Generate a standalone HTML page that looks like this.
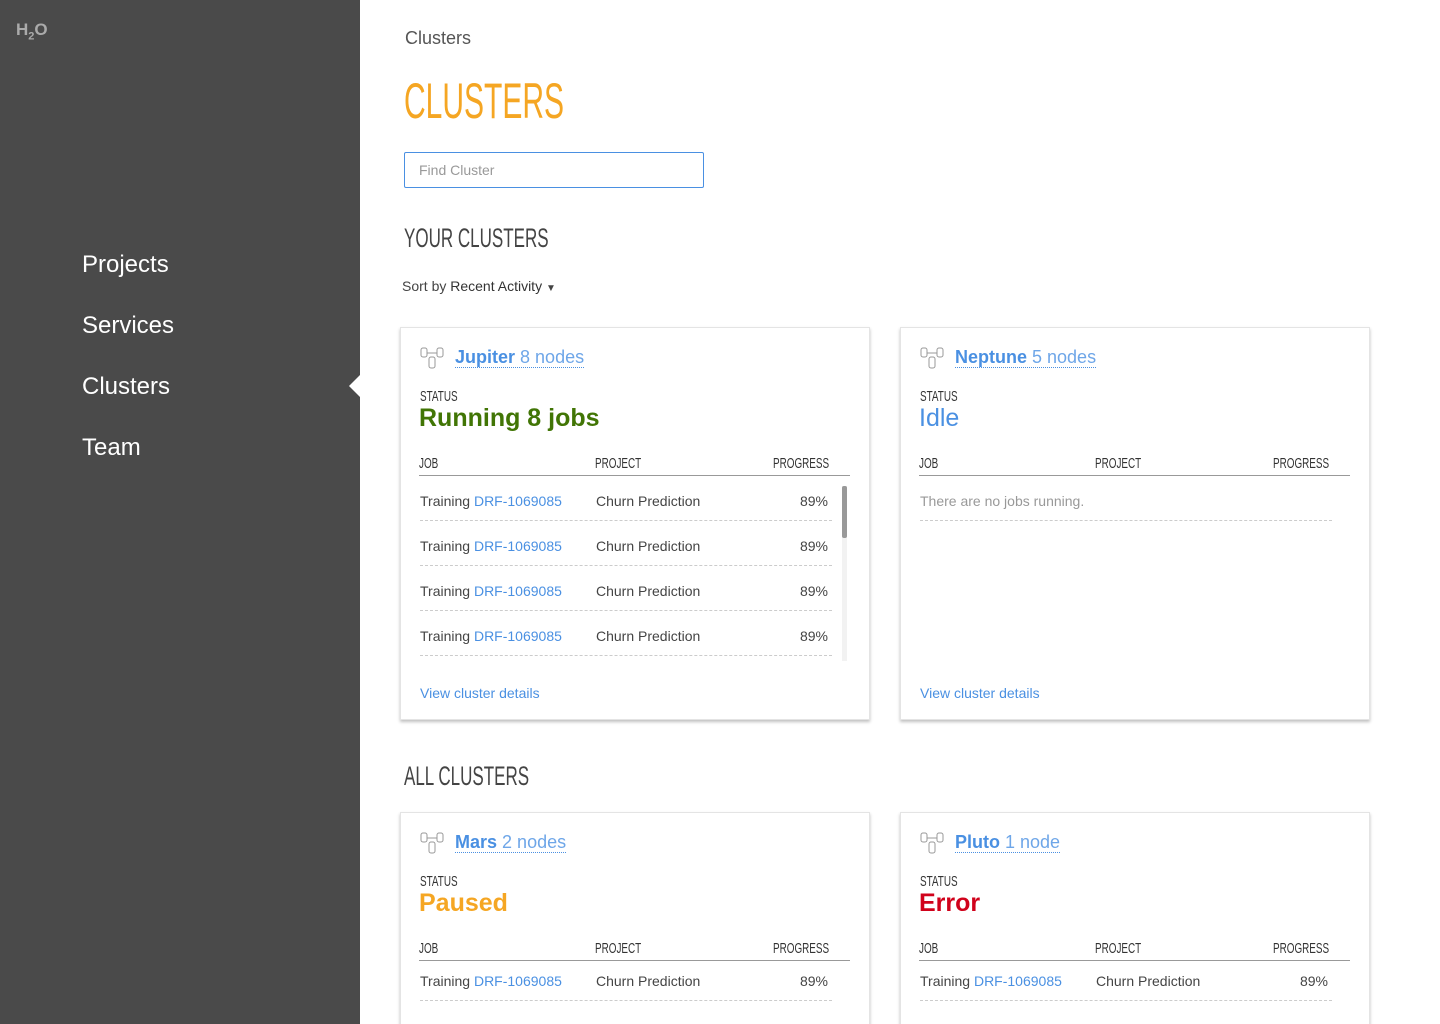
<!DOCTYPE html><html><head><meta charset="utf-8"><style>
*{margin:0;padding:0;box-sizing:border-box}
html,body{width:1440px;height:1024px;overflow:hidden}
body{background:#fff;font-family:"Liberation Sans",sans-serif;color:#444;position:relative}
.a{position:absolute;white-space:nowrap}
.side{position:absolute;left:0;top:0;width:360px;height:1024px;background:#4a4a4a}
.nav{position:absolute;left:82px;color:#fff;font-size:24px}
.cond{display:inline-block;transform:scaleX(.66);transform-origin:left center}
.card{position:absolute;width:470px;background:#fff;border:1px solid #e4e4e4;box-shadow:0 2px 3px rgba(0,0,0,.25)}
.blue{color:#4a90e2}
.ttl{position:absolute;left:54px;top:19px;font-size:18px;color:#4a90e2;border-bottom:1px dotted #4a90e2;line-height:20px}
.ttl b{font-weight:bold}
.ttl span{font-weight:normal;color:#6ea6e8}
.st{position:absolute;left:19px;font-size:15px;color:#333}
.sv{position:absolute;left:18px;font-size:25px;font-weight:bold}
.hd{position:absolute;left:18px;width:431px;font-size:15px;color:#333;border-bottom:1px solid #999;height:21px}
.row{position:absolute;left:19px;width:412px;height:45px;border-bottom:1px dashed #ccc;font-size:14px;color:#444;line-height:50px}
.row .p{position:absolute;left:176px}.row .g{position:absolute;right:4px}
.vd{position:absolute;left:19px;font-size:14px;color:#4a90e2}
</style></head><body>
<div class="side">
<div class="a" style="left:16px;top:20px;color:#aaa;font-weight:bold;font-size:17px">H<sub style="font-size:11px">2</sub>O</div>
<div class="nav" style="top:251px">Projects</div>
<div class="nav" style="top:312px">Services</div>
<div class="nav" style="top:373px">Clusters</div>
<div class="nav" style="top:434px">Team</div>
<div class="a" style="left:349px;top:375px;width:0;height:0;border-top:11px solid transparent;border-bottom:11px solid transparent;border-right:11px solid #fff"></div>
</div>
<div class="a" style="left:405px;top:28px;font-size:18px;color:#555">Clusters</div>
<div class="a" style="left:404px;top:72px;font-size:50px;color:#f5a623"><span class="cond" style="transform:scaleX(.6)">CLUSTERS</span></div>
<div class="a" style="left:404px;top:152px;width:300px;height:36px;border:1px solid #4a90e2;border-radius:2px;font-size:14px;color:#999;padding:9px 14px">Find Cluster</div>
<div class="a" style="left:404px;top:223px;font-size:27px;color:#444"><span class="cond" style="transform:scaleX(.63)">YOUR CLUSTERS</span></div>
<div class="a" style="left:402px;top:278px;font-size:14px;color:#444">Sort by <span style="color:#333">Recent Activity</span> <span style="font-size:10px">▼</span></div>
<div class="a" style="left:404px;top:761px;font-size:27px;color:#444"><span class="cond" style="transform:scaleX(.63)">ALL CLUSTERS</span></div>

<div class="card" style="left:400px;top:327px;height:393px">
<svg class="a" style="left:19px;top:18px" width="25" height="24" viewBox="0 0 25 24" fill="none" stroke="#999" stroke-width="1"><rect x="1" y="2" width="6" height="9" rx="2"/><rect x="17" y="2" width="6" height="9" rx="2"/><rect x="9" y="11" width="6" height="11" rx="2"/><path d="M7 7h10"/></svg>
<div class="ttl"><b>Jupiter</b> <span>8 nodes</span></div>
<div class="st" style="top:60px"><span class="cond">STATUS</span></div>
<div class="sv" style="top:76px;color:#417505">Running 8 jobs</div>
<div class="hd" style="top:127px"><span class="cond">JOB</span><span class="cond" style="position:absolute;left:176px">PROJECT</span><span class="cond" style="position:absolute;left:354px">PROGRESS</span></div>
<div class="row" style="top:148px">Training <span class="blue">DRF-1069085</span><span class="p">Churn Prediction</span><span class="g">89%</span></div>
<div class="row" style="top:193px">Training <span class="blue">DRF-1069085</span><span class="p">Churn Prediction</span><span class="g">89%</span></div>
<div class="row" style="top:238px">Training <span class="blue">DRF-1069085</span><span class="p">Churn Prediction</span><span class="g">89%</span></div>
<div class="row" style="top:283px">Training <span class="blue">DRF-1069085</span><span class="p">Churn Prediction</span><span class="g">89%</span></div>
<div class="a" style="left:441px;top:158px;width:5px;height:175px;background:#f2f2f2"></div>
<div class="a" style="left:441px;top:158px;width:5px;height:52px;background:#999;border-radius:2px"></div>
<div class="vd" style="top:357px">View cluster details</div>
</div>

<div class="card" style="left:900px;top:327px;height:393px">
<svg class="a" style="left:19px;top:18px" width="25" height="24" viewBox="0 0 25 24" fill="none" stroke="#999" stroke-width="1"><rect x="1" y="2" width="6" height="9" rx="2"/><rect x="17" y="2" width="6" height="9" rx="2"/><rect x="9" y="11" width="6" height="11" rx="2"/><path d="M7 7h10"/></svg>
<div class="ttl"><b>Neptune</b> <span>5 nodes</span></div>
<div class="st" style="top:60px"><span class="cond">STATUS</span></div>
<div class="sv" style="top:76px;color:#4a90e2;font-weight:normal">Idle</div>
<div class="hd" style="top:127px"><span class="cond">JOB</span><span class="cond" style="position:absolute;left:176px">PROJECT</span><span class="cond" style="position:absolute;left:354px">PROGRESS</span></div>
<div class="row" style="top:148px;color:#999">There are no jobs running.</div>
<div class="vd" style="top:357px">View cluster details</div>
</div>

<div class="card" style="left:400px;top:812px;height:230px">
<svg class="a" style="left:19px;top:18px" width="25" height="24" viewBox="0 0 25 24" fill="none" stroke="#999" stroke-width="1"><rect x="1" y="2" width="6" height="9" rx="2"/><rect x="17" y="2" width="6" height="9" rx="2"/><rect x="9" y="11" width="6" height="11" rx="2"/><path d="M7 7h10"/></svg>
<div class="ttl"><b>Mars</b> <span>2 nodes</span></div>
<div class="st" style="top:60px"><span class="cond">STATUS</span></div>
<div class="sv" style="top:76px;color:#f5a623">Paused</div>
<div class="hd" style="top:127px"><span class="cond">JOB</span><span class="cond" style="position:absolute;left:176px">PROJECT</span><span class="cond" style="position:absolute;left:354px">PROGRESS</span></div>
<div class="row" style="top:143px">Training <span class="blue">DRF-1069085</span><span class="p">Churn Prediction</span><span class="g">89%</span></div>
</div>

<div class="card" style="left:900px;top:812px;height:230px">
<svg class="a" style="left:19px;top:18px" width="25" height="24" viewBox="0 0 25 24" fill="none" stroke="#999" stroke-width="1"><rect x="1" y="2" width="6" height="9" rx="2"/><rect x="17" y="2" width="6" height="9" rx="2"/><rect x="9" y="11" width="6" height="11" rx="2"/><path d="M7 7h10"/></svg>
<div class="ttl"><b>Pluto</b> <span>1 node</span></div>
<div class="st" style="top:60px"><span class="cond">STATUS</span></div>
<div class="sv" style="top:76px;color:#d0021b">Error</div>
<div class="hd" style="top:127px"><span class="cond">JOB</span><span class="cond" style="position:absolute;left:176px">PROJECT</span><span class="cond" style="position:absolute;left:354px">PROGRESS</span></div>
<div class="row" style="top:143px">Training <span class="blue">DRF-1069085</span><span class="p">Churn Prediction</span><span class="g">89%</span></div>
</div>
</body></html>
